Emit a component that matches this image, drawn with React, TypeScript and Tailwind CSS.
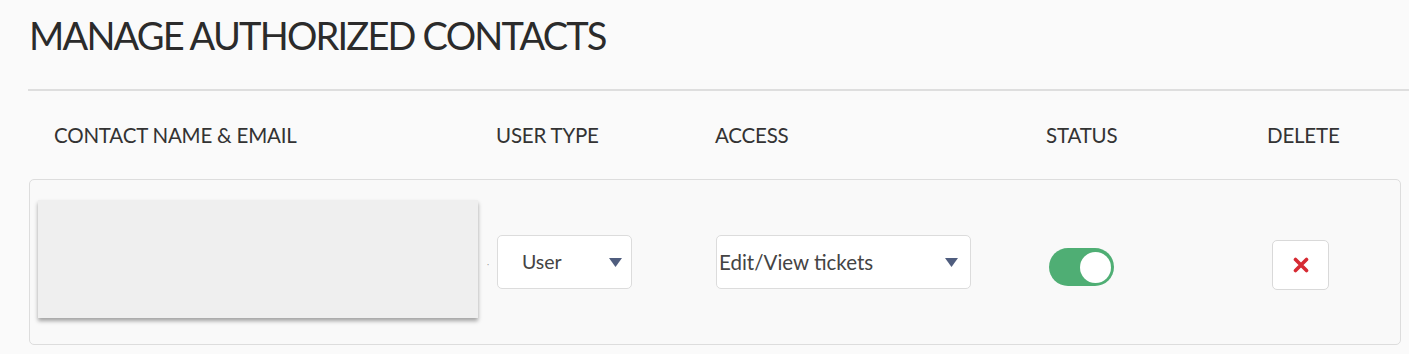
const font = { fontFamily: '"Lato", "Open Sans", sans-serif' };

const Caret = () => (
  <svg width="13" height="9" viewBox="0 0 13 9" className="shrink-0">
    <path d="M0 0 L13 0 L6.5 9 Z" fill="#4f5d7e" />
  </svg>
);

export default function App() {
  return (
    <div className="w-[1409px] h-[354px] bg-[#fafafa] overflow-hidden text-[#333]" style={font}>
      <h1 className="pl-[29px] pt-[12px] h-[89px] text-[38px] leading-[46px] font-normal text-[#2b2b2b] tracking-[-1.8px]">
        MANAGE AUTHORIZED CONTACTS
      </h1>
      <div className="ml-[28px] h-[2px] bg-[#dedede]" />

      <div className="flex items-center h-[88px] pl-[54px] text-[20.5px] tracking-[-0.2px] text-[#333]">
        <div className="w-[442px]">CONTACT NAME &amp; EMAIL</div>
        <div className="w-[219px]">USER TYPE</div>
        <div className="w-[331px]">ACCESS</div>
        <div className="w-[221px]">STATUS</div>
        <div>DELETE</div>
      </div>

      <div className="ml-[29px] w-[1372px] h-[166px] border border-[#dddddd] rounded-[5px] bg-[#f9f9f9] flex items-start">
        <div className="ml-[8px] mt-[20px] w-[440px] h-[118px] bg-[#efefef] shadow-[0_3px_4px_rgba(0,0,0,0.35)]" />
        <div className="w-[19px] mt-[80px] pl-[9px] text-[8px] text-[#999] leading-none">·</div>
        <div className="mt-[55px] w-[135px] h-[54px] bg-white border border-[#dcdcdc] rounded-[5px] flex items-center justify-between pl-[24px] pr-[9px] text-[19.5px] text-[#444]">
          <span>User</span>
          <Caret />
        </div>
        <div className="ml-[84px] mt-[55px] w-[255px] h-[54px] bg-white border border-[#dcdcdc] rounded-[5px] flex items-center justify-between pl-[2px] pr-[12px] text-[20.5px] text-[#444]">
          <span>Edit/View tickets</span>
          <Caret />
        </div>
        <div className="ml-[78px] mt-[68px] w-[65px] h-[38px] rounded-full bg-[#4fae74] flex items-center justify-end pr-[3px]">
          <div className="w-[31px] h-[31px] rounded-full bg-white" />
        </div>
        <div className="ml-[158px] mt-[60px] w-[57px] h-[50px] bg-white border border-[#d9d9d9] rounded-[5px] flex items-center justify-center">
          <svg width="16" height="16" viewBox="0 0 16 16">
            <path d="M2.5 2.5 L13.5 13.5 M13.5 2.5 L2.5 13.5" stroke="#d62a33" strokeWidth="3.6" strokeLinecap="round" />
          </svg>
        </div>
      </div>
    </div>
  );
}
